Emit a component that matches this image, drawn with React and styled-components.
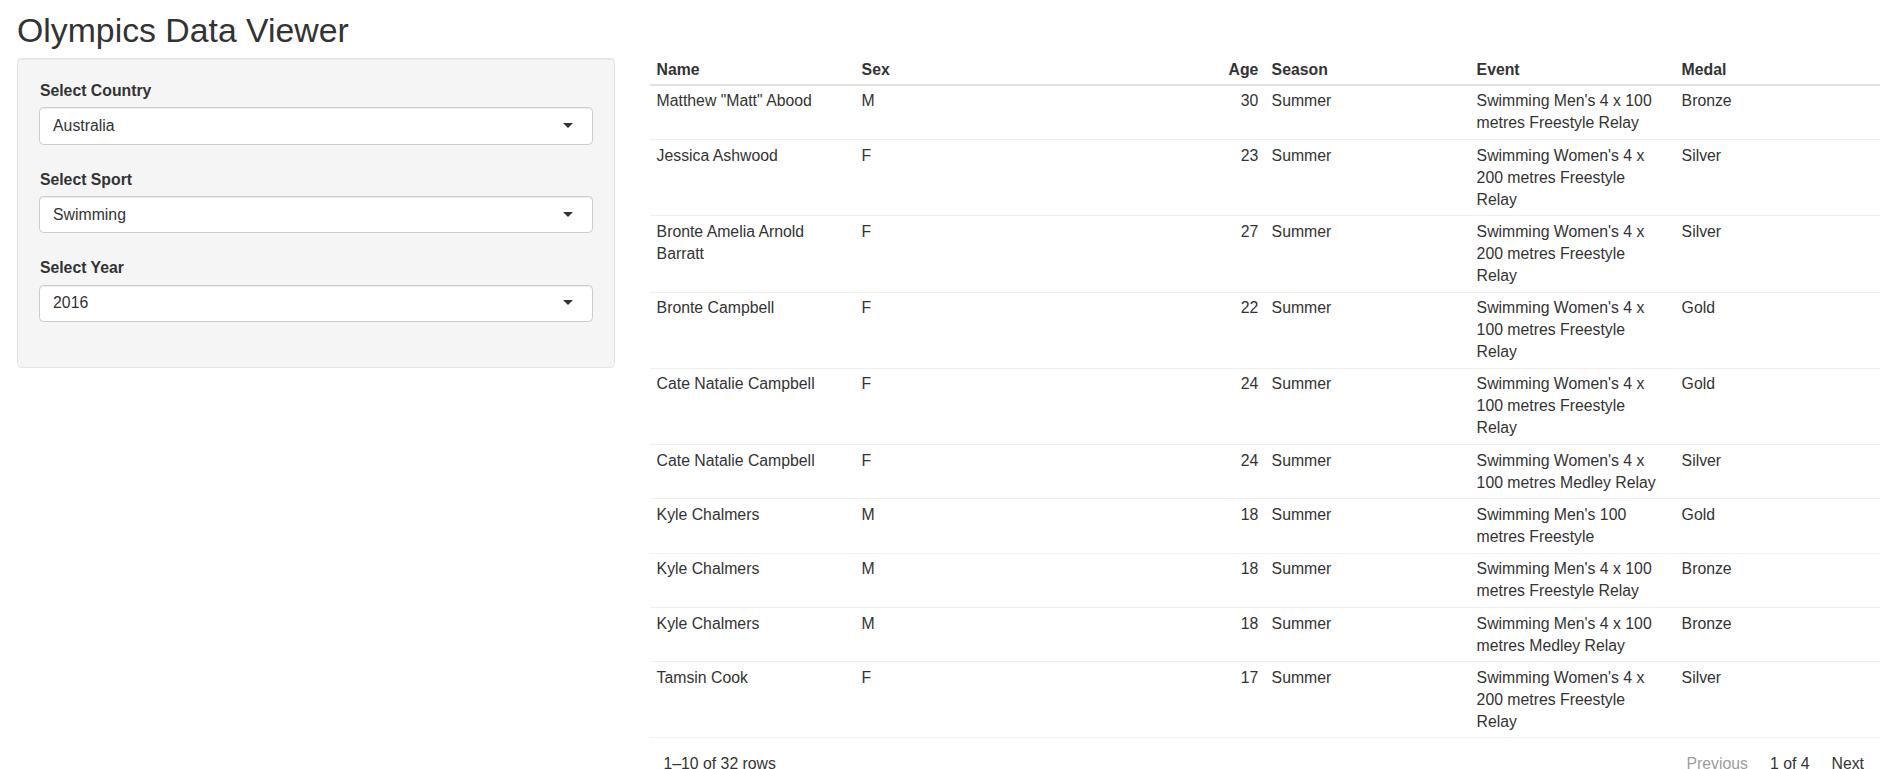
import React from 'react';
import styled, { createGlobalStyle } from 'styled-components';

const rows = [
  { name: 'Matthew "Matt" Abood', sex: 'M', age: 30, season: 'Summer', event: "Swimming Men's 4 x 100 metres Freestyle Relay", medal: 'Bronze' },
  { name: 'Jessica Ashwood', sex: 'F', age: 23, season: 'Summer', event: "Swimming Women's 4 x 200 metres Freestyle Relay", medal: 'Silver' },
  { name: 'Bronte Amelia Arnold Barratt', sex: 'F', age: 27, season: 'Summer', event: "Swimming Women's 4 x 200 metres Freestyle Relay", medal: 'Silver' },
  { name: 'Bronte Campbell', sex: 'F', age: 22, season: 'Summer', event: "Swimming Women's 4 x 100 metres Freestyle Relay", medal: 'Gold' },
  { name: 'Cate Natalie Campbell', sex: 'F', age: 24, season: 'Summer', event: "Swimming Women's 4 x 100 metres Freestyle Relay", medal: 'Gold' },
  { name: 'Cate Natalie Campbell', sex: 'F', age: 24, season: 'Summer', event: "Swimming Women's 4 x 100 metres Medley Relay", medal: 'Silver' },
  { name: 'Kyle Chalmers', sex: 'M', age: 18, season: 'Summer', event: "Swimming Men's 100 metres Freestyle", medal: 'Gold' },
  { name: 'Kyle Chalmers', sex: 'M', age: 18, season: 'Summer', event: "Swimming Men's 4 x 100 metres Freestyle Relay", medal: 'Bronze' },
  { name: 'Kyle Chalmers', sex: 'M', age: 18, season: 'Summer', event: "Swimming Men's 4 x 100 metres Medley Relay", medal: 'Bronze' },
  { name: 'Tamsin Cook', sex: 'F', age: 17, season: 'Summer', event: "Swimming Women's 4 x 200 metres Freestyle Relay", medal: 'Silver' },
];

const filters = [
  { label: 'Select Country', value: 'Australia' },
  { label: 'Select Sport', value: 'Swimming' },
  { label: 'Select Year', value: '2016' },
];

export default function App() {
  return (
    <Page>
      <GlobalStyle />
      <Title>Olympics Data Viewer</Title>
      <Layout>
        <Well>
          {filters.map((f) => (
            <Field key={f.label}>
              <Label>{f.label}</Label>
              <SelectBox>
                <span>{f.value}</span>
                <Caret />
              </SelectBox>
            </Field>
          ))}
        </Well>
        <Main>
          <Table>
            <thead>
              <tr>
                <Th>Name</Th>
                <Th>Sex</Th>
                <Th $right>Age</Th>
                <Th>Season</Th>
                <Th>Event</Th>
                <Th>Medal</Th>
              </tr>
            </thead>
            <tbody>
              {rows.map((r, i) => (
                <tr key={i}>
                  <Td>{r.name}</Td>
                  <Td>{r.sex}</Td>
                  <Td $right>{r.age}</Td>
                  <Td>{r.season}</Td>
                  <Td>{r.event}</Td>
                  <Td>{r.medal}</Td>
                </tr>
              ))}
            </tbody>
          </Table>
          <Pagination>
            <span>1–10 of 32 rows</span>
            <PageNav>
              <PageButton $disabled>Previous</PageButton>
              <span>1 of 4</span>
              <PageButton>Next</PageButton>
            </PageNav>
          </Pagination>
        </Main>
      </Layout>
    </Page>
  );
}

const GlobalStyle = createGlobalStyle`
  html, body {
    margin: 0;
    padding: 0;
    overflow: hidden;
    background: #fff;
  }
  body {
    font-family: "Liberation Sans", Arial, sans-serif;
    font-size: 15.8px;
    line-height: 22px;
    color: #333;
  }
  * { box-sizing: border-box; }
`

const Page = styled.div`
  padding: 12.4px 0 0 17px;
`

const Title = styled.h2`
  margin: 0 0 6.3px;
  font-size: 33.8px;
  line-height: 36.3px;
  font-weight: 500;
  color: #333;
`

const Layout = styled.div`
  display: flex;
  align-items: flex-start;
`

const Well = styled.div`
  display: flex;
  flex-direction: column;
  gap: 24px;
  width: 598px;
  margin-top: 3px;
  padding: 20.9px 20.9px 44.9px;
  background: #f5f5f5;
  border: 1px solid #e3e3e3;
  border-radius: 4.4px;
  box-shadow: inset 0 1px 1px rgba(0,0,0,0.05);
`

const Field = styled.div`
  display: flex;
  flex-direction: column;
`

const Label = styled.label`
  display: block;
  margin: 0 0 5.5px 1px;
  font-weight: bold;
`

const SelectBox = styled.div`
  display: flex;
  align-items: center;
  justify-content: space-between;
  padding: 6.6px 13.2px;
  background: #fff;
  border: 1px solid #ccc;
  border-radius: 4.4px;
  box-shadow: inset 0 1px 1px rgba(0,0,0,0.075);
  color: #333;
`

const Caret = styled.span`
  width: 0;
  height: 0;
  margin: -1px 5.8px 0 0;
  border-style: solid;
  border-width: 5.5px 5.5px 0;
  border-color: #333 transparent transparent;
`

const Main = styled.div`
  flex: 1;
  margin-left: 35px;
`

const Table = styled.table`
  width: 100%;
  table-layout: fixed;
  border-collapse: separate;
  border-spacing: 0;
  font-family: "Liberation Sans", Arial, sans-serif;
  font-size: 15.8px;
  line-height: 22px;
  color: #333;
`

const Th = styled.th`
  padding: 4.4px 6.6px 2.3px;
  text-align: ${(p) => (p.$right ? 'right' : 'left')};
  font-weight: bold;
  border-bottom: 2px solid #e2e2e2;
  vertical-align: bottom;
`

const Td = styled.td`
  padding: 4.7px 6.6px 4.6px;
  text-align: ${(p) => (p.$right ? 'right' : 'left')};
  border-bottom: 1px solid #efefef;
  vertical-align: top;
`

const Pagination = styled.div`
  display: flex;
  justify-content: space-between;
  padding: 15px 16px 0 13.5px;
`

const PageNav = styled.div`
  display: flex;
  gap: 22px;
`

const PageButton = styled.span`
  color: ${(p) => (p.$disabled ? '#9d9d9d' : '#333')};
`
